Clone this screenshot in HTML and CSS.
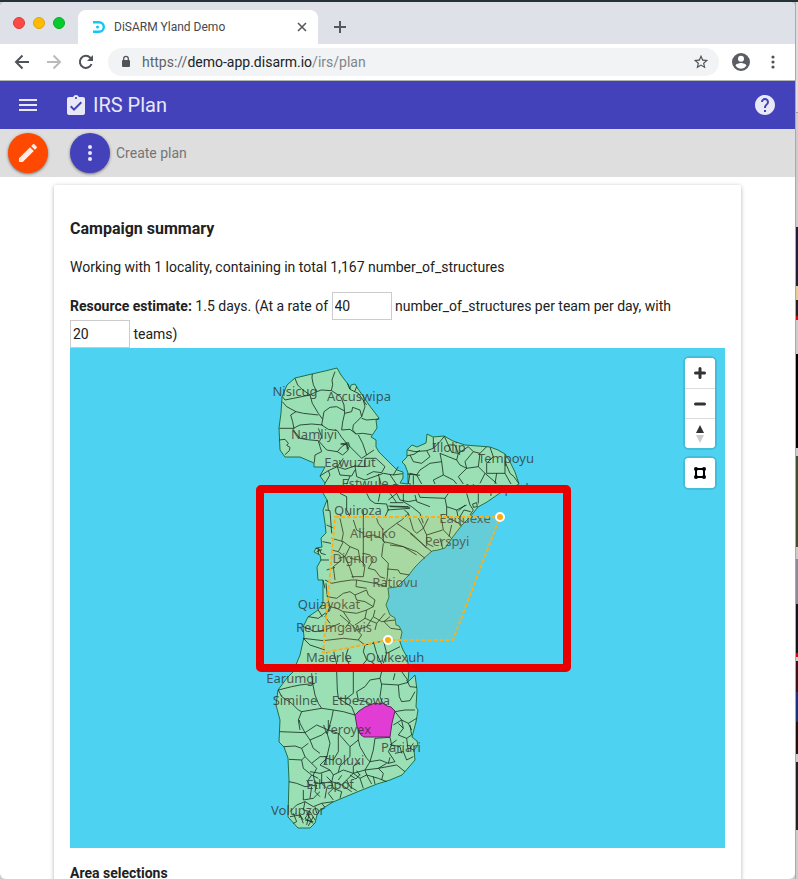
FILE: index.html
```html
<!DOCTYPE html>
<html lang="en">
<head>
<meta charset="utf-8">
<title>DiSARM Yland Demo</title>
<link rel="stylesheet" href="styles.css">
</head>
<body>
<div class="window">
  <header class="tabstrip">
    <div class="lights"><span class="light close"></span><span class="light minimise"></span><span class="light expand"></span></div>
    <div class="tab">
      <svg class="favicon" width="14" height="14" viewBox="0 0 14 14"><path d="M1 2.200h6a4.800 4.800 0 0 1 0 9.600H1" fill="none" stroke="#0fc8f5" stroke-width="2.400"/><circle cx="5.500" cy="7" r="1.500" fill="#0fc8f5"/></svg>
      <span class="tab-title">DiSARM Yland Demo</span>
      <button class="plain" aria-label="Close tab"><svg width="10" height="10" viewBox="0 0 10 10"><path d="M1 1l8 8M9 1l-8 8" stroke="#55595e" stroke-width="1.600"/></svg></button>
    </div>
    <button class="plain new-tab" aria-label="New tab"><svg width="12" height="12" viewBox="0 0 12 12"><path d="M6 0v12M0 6h12" stroke="#55595e" stroke-width="2"/></svg></button>
  </header>
  <nav class="toolbar">
    <button class="plain nav-button" aria-label="Back"><svg width="16" height="16" viewBox="0 0 16 16"><path d="M15 8H2M8.500 1.500L2 8l6.500 6.500" fill="none" stroke="#50545a" stroke-width="2"/></svg></button>
    <button class="plain nav-button" aria-label="Forward"><svg width="16" height="16" viewBox="0 0 16 16"><path d="M1 8h13M7.500 1.500L14 8l-6.500 6.500" fill="none" stroke="#b9bbbd" stroke-width="2"/></svg></button>
    <button class="plain nav-button" aria-label="Reload"><svg width="16" height="16" viewBox="0 0 16 16"><path d="M13.500 10A6 6 0 1 1 12.300 3.800L14 5.500" fill="none" stroke="#50545a" stroke-width="2"/><path d="M15 1v6H9z" fill="#50545a"/></svg></button>
    <div class="omnibox">
      <svg width="10" height="14" viewBox="0 0 10 14"><rect x="1" y="5" width="8" height="7" rx="1" fill="#50545a"/><path d="M2.700 5V3.600a2.300 2.300 0 0 1 4.600 0V5" fill="none" stroke="#50545a" stroke-width="1.300"/></svg>
      <span class="url">https://<b>demo-app.disarm.io</b><i>/irs/plan</i></span>
      <button class="plain" aria-label="Bookmark this page"><svg width="16" height="16" viewBox="1 1 22 22"><path fill="#50545a" d="M22 9.240l-7.190-.62L12 2 9.190 8.630 2 9.240l5.460 4.730L5.820 21 12 17.270 18.180 21l-1.630-7.030L22 9.240zM12 15.400l-3.760 2.270 1-4.280-3.320-2.880 4.380-.38L12 6.100l1.710 4.040 4.380.38-3.320 2.880 1 4.280L12 15.400z"/></svg></button>
    </div>
    <button class="plain profile" aria-label="Profile"><svg width="20" height="20" viewBox="2 2 20 20"><path fill="#5a5e64" d="M12 3a9 9 0 1 0 0 18 9 9 0 0 0 0-18zm0 2.800a3 3 0 1 1 0 6 3 3 0 0 1 0-6zm0 12.900a6.500 6.500 0 0 1-5.400-3c0-1.800 3.600-2.700 5.400-2.700s5.400.9 5.400 2.700a6.500 6.500 0 0 1-5.400 3z"/></svg></button>
    <button class="plain more" aria-label="Browser menu"><svg width="4" height="14" viewBox="0 0 4 14" fill="#50545a"><circle cx="2" cy="2" r="1.600"/><circle cx="2" cy="7" r="1.600"/><circle cx="2" cy="12" r="1.600"/></svg></button>
  </nav>

  <div class="appbar">
    <button class="plain" aria-label="Menu"><svg width="18" height="12" viewBox="0 0 18 12" fill="#e8e8f6"><path d="M0 0h18v2H0zM0 5h18v2H0zM0 10h18v2H0z"/></svg></button>
    <svg class="plan-icon" width="18" height="20" viewBox="3 1 18 20"><path fill="#e8e8f6" d="M19 3h-4.180C14.400 1.840 13.300 1 12 1s-2.400.84-2.820 2H5c-1.100 0-2 .9-2 2v14c0 1.100.9 2 2 2h14c1.100 0 2-.9 2-2V5c0-1.100-.9-2-2-2zm-7 0c.55 0 1 .45 1 1s-.45 1-1 1-1-.45-1-1 .45-1 1-1zm-2 14l-4-4 1.410-1.410L10 14.170l6.590-6.590L18 9l-8 8z"/></svg>
    <h1>IRS Plan</h1>
    <button class="plain help" aria-label="Help"><svg width="20" height="20" viewBox="2 2 20 20"><path fill="#e8e8f6" d="M12 2C6.480 2 2 6.480 2 12s4.480 10 10 10 10-4.480 10-10S17.520 2 12 2zm1 17h-2v-2h2v2zm2.070-7.750l-.9.920C13.450 12.900 13 13.500 13 15h-2v-.5c0-1.100.45-2.100 1.170-2.830l1.240-1.260c.37-.36.59-.86.59-1.410 0-1.100-.9-2-2-2s-2 .9-2 2H8c0-2.210 1.790-4 4-4s4 1.790 4 4c0 .88-.36 1.680-.93 2.250z"/></svg></button>
  </div>
  <div class="actions">
    <button class="fab edit" aria-label="Edit"><svg width="18" height="18" viewBox="3 3 18 18"><path fill="#ffece5" d="M3 17.250V21h3.750L17.810 9.940l-3.750-3.750L3 17.250zM20.710 7.040c.39-.39.39-1.020 0-1.410l-2.340-2.340c-.39-.39-1.020-.39-1.410 0l-1.830 1.830 3.750 3.750 1.830-1.830z"/></svg></button>
    <button class="fab options" aria-label="Options"><svg width="4" height="16" viewBox="0 0 4 16" fill="#e8e8f6"><circle cx="2" cy="2" r="2"/><circle cx="2" cy="8" r="2"/><circle cx="2" cy="14" r="2"/></svg></button>
    <span class="actions-label">Create plan</span>
  </div>

  <main class="content">
    <section class="card">
      <h2>Campaign summary</h2>
      <p>Working with 1 locality, containing in total 1,167 number_of_structures</p>
      <p class="estimate"><strong>Resource estimate:</strong> 1.5 days. (At a rate of <input type="text" value="40" aria-label="Structures per team per day"> number_of_structures per team per day, with <input type="text" value="20" aria-label="Number of teams"> teams)</p>
      <div class="map">
        <svg class="map-canvas" viewBox="70 348 655 500" preserveAspectRatio="xMidYMid slice">
          <path class="land" d="M337 368L341 375 344 379 348 384 350 389 351 385 355 384 358 389 363 396 369 405 379 418 376 420 377 428 373 434 371 437 376 440 376 447 379 452 386 459 392 465 397 470 403 472 403 478 400 483 408 484 408 473 405 465 402 462 407 457 407 450 412 445 417 447 426 443 427 434 433 437 444 436 453 441 465 445 490 447 498 450 505 454 509 460 515 472 519 484 510 489 500 493 487 502 478 507 470 517 462 525 452 538 445 548 438 550 432 551 422 560 415 567 408 576 397 587 388 588 389 597 386 605 388 610 390 615 395 618 396 625 399 626 402 632 400 642 403 650 407 657 409 670 408 682 412 678 415 675 417 690 416 707 418 710 416 722 412 737 417 741 418 745 414 750 415 760 409 767 402 775 390 780 377 784 357 792 333 802 320 810 317 815 315 823 310 828 298 828 288 817 289 780 288 758 284 747 279 742 280 720 276 705 278 690 287 678 293 672 300 655 304 637 303 627 308 617 318 610 323 603 323 580 318 580 317 567 321 560 320 555 314 552 316 548 322 547 321 538 326 533 325 523 323 510 327 500 323 493 325 483 320 476 325 467 314 467 314 463 300 457 285 457 280 450 279 428 281 413 282 397 287 385 295 378 312 374 325 371z"/>
          <g class="borders" transform="translate(250 350) scale(.3333)">
            <path d="M135 85l8 20 12 12 25 18 7 25 18 30 13 18M187 72l-1 12 4 20 10 21M200 125l14-5 30 2 4-18-2-14 9-25M180 135l20-10M245 122l27 18 10 25 2 25-6 26-3 24M218 208l4-23 18-13 20-2 22 12M97 140l8 10 25-5 50-10M97 155l13 15 28 15 22 5 45 5M138 185l-16 10 6 20 4 22M88 235h42l20-10 35-3 33 3M218 208l-3 17 20 13 27 4 13 20 15 18M128 237l22 28 22 4 33 3 5 18 5 15-20 10-2 23M88 270l17-2 10 12-5 6 10 6-2 10-13 12M205 235l10 25-7 15 22 25 32 5 13-15 15-10M275 240l25-2 18 14 20-2 27 4M284 190l21-5 3-13 22 8 5 20-25 25-2 15 10 12M335 205l15 5 38-3M335 200l10-30-5-20M292 100l8 18 25 12 25 35M320 110l-6 15M325 255l13 25 12 35 22-15M290 280l5 20-17 15-16-10M272 282l18 2 2 14 6-8-2-12zM290 280l20 20 25 25 15-10M210 378l25-16 27-12 23 8 30-10 30 2V325M262 350l8 25 35 3 10-18M280 325l-18 25M315 348l5 32 25 10 55-20 30 5 28-4M350 375l20-10 25 3 10-18-27-25h-33M225 400l15-25-5-13M430 375l15-25M300 378l-10 25M385 372l8 32M420 374l20 30M472 317l20-4 18-12M472 372l38 4M490 376v28"/>
          </g>
          <g class="borders" transform="translate(390 410) scale(.3333)">
            <path d="M53 120l22 5 35-3 10 18-25 20-25-5-10-20M130 82v33l-20 7M130 115l20-20 13-16M60 190l20 5 10-15 30-20 35-5 5 40M155 155l-5-25 25 10 25 10 5-20-10-25M205 130l30-20 15 15-25 30 5 20M200 150l10 15 20 10 35-5 20 20-15 30M230 175l-25 25 15 22M250 125l20 5 20-20M270 130l-5 40M300 112l10 28-20 20v30h55M345 133v57l18 32M345 155l15 35 12 10 14 20M320 190l-5 32M160 195l30 15 10 12M60 190l-5 32M80 195l15 27M160 195l-30 15 5 12M163 79l12 26 10 22 20 3M175 105l20 0M285 190l35 30M40 250v25l25 15M85 250l5 12 75 3 5 25 30 10 30-15M165 265l10-15M230 250l10 35 10 15M265 250v30M65 290l25 20 10 30M170 290v30l45 25M85 325l12 22 13 28v25l20 10M0 405l40 5 40 25M60 370l65 55M155 330l5 30 25 25M110 375l48-15M200 300l5 25 15 12M225 285l-20 18M248 282l12-4 2 12-12 2zM250 300l-10 15M0 290l60 2M0 278h40M0 250l20 28M185 345l-8 35M150 385l8 30M210 320l12-20 20 5"/>
          </g>
          <g class="borders" transform="translate(250 480) scale(.3333)">
            <path d="M235 90l-3-30M270 40l20 10v40l10 20M225 90l15 2 5 68M350 40l10 20 15 10 35 2 5 18-10 20M390 40l-5 25M415 60l25-20 10 20 25 5 25-5M415 78l60 2M412 90l68-5M495 45l5 20 40 15M340 90v170M270 115l10 45-5 25M310 120l10 30 20 10M340 170l30-5 25 10 10 15M440 130l-40 30v25l25 5 35 10 40 15 25 20M440 130l30 20 20 15 40 40M475 100l15 50 10 10 20-15 15-30M440 130l15-10 20-20-12-10M380 115l5 15 15 20M400 190l-5 40 20 20-3 40-4 30M412 267l33 3 5 10 28 5M245 175l35 10 20 15 25 10 5 30 15 15M280 185l-15 30M300 200l-15 30-20 5M245 210l20 5 20 15 15 35 10 30M355 265l15-25-10-15-20-5M355 265l20 5 15 20 15 5M345 255l-5 35h-35M225 300l20 10 25-5 35-5h15l-2 20 32 5M250 260l5 40M250 260l25-20M228 310l4 40 28 5 20-15 20-5 15 10 35-15M320 300l55 10 35 10M315 345l5 15 25 5 25 15 5-20-20-15-5-15M232 350l8 30 20 5 20 10 40 5 30-10 20-10M240 380l-15 30 15 20M280 395l20 30-15 20M350 390l-5 25 35 15 25-30M197 205l12 3 4 12 14 4M200 215l16-6M205 205v18M212 240h25M230 270l25-8M300 235l28 5M205 390l12 20M380 430l-5 20M345 415l-30 20M230 135l18 8M218 185l25 5M225 325l-6-25"/>
          </g>
          <g class="borders" transform="translate(250 610) scale(.3333)">
            <path d="M175 20l30 5 20-15 15-10M160 85l60 7 60-7 45 5 10-15-15-15-20-20-30-25M320 60l30-10 20-30 5-20M325 90l20 15 45-10M160 85l20 20 45 15M345 105l-5 20 10 25-10 12M370 95l10 35 15 32M400 90l10 40 40-20M85 240l40-10 25-5 45-5M185 190l3 30 7 35 10 25 10 15M260 185l2 55 3 25 40 25 10 25M265 265h25l20-15v-65M320 245l5 25 25 5 20 15M320 245l25-15 15-20 30-5 5-20M390 205l5 20-5 35 10 25M395 222l50 3 3 35 7 15 25-3 15-27M435 190l-5 20M470 210l10 20 20 2M85 240l10 20 30 20 20 20 10 5-10 25 5 30M155 305l60-10 35 5 30 5 35 10M250 300l-5 25-10 35M435 305l30-5h30M435 305l20 25 20 10 25-15M160 50l35 15 30-5M225 60l45-20M250 120l10 42M295 115l-8 25 10 22M410 130l-10 30M370 20l25 15 40-5M420 20l-18 15 20 20 30 4M455 185l18 25M445 225l30-8M455 330l-25 15M475 340l10 20"/>
          </g>
          <g class="borders" transform="translate(250 720) scale(.3333)">
            <path d="M90 35l75 3 15 22 10 25 20 15M165 38l-15-28-2-10M165 38l35-23 35 15V0M180 60l35-15 20-15M230 35l10 35-8 35M235 30l30 10 35 40 25-20M265 40v55l-15 25M300 80v30l-30 28M325 0v60l5 20 20 35 10 10M375 55l-5 35-10 35M375 55l45-3 5 23-10 20 20 30M102 80l33-2 20 7 10 25-10 10-38-2M155 85l20-15M165 110l20 20 15 15M185 130l25-20 22 0M155 120l5 25 25 20-10 15M117 185l23 5 25 10 35-5M160 210v30M250 120l-20-5-20 20 30 15 10 15 30-15 30 10 35-10 40-5 55-10M250 165l-5 20 30 10 15-15 20-20M310 160l20 15 20-10 35 10 25 10M345 150l5 15M385 145l15 15-5 20M290 180l10 20 20 12M200 145l-10 20 5 25h20l15 15-5 30M215 190l30-5 5 20 25 10-5 20M250 205l-15 15 15 20M160 240l30-5 20-20M140 255l25-10 25 15 25-10 35-5M140 255l-20 20M165 245l-5 25 20 5 15 25M150 285l10 25M180 275l-15 20 25 15M120 290l30-5 10 15M440 60l-20 15M445 10l15 15-15 20 25 10 15-10M435 100l25-5 10 25 20-10M270 138l-5 18M232 105l-10 30M330 128l-20 10 0 22M360 125l-15 25M360 125l30-5 25 10 20-5M410 130l-25 15M330 175l10 30M350 165l15 27M370 170l5 22M185 165l20 10M170 180l10 18M185 200l-5 35M200 195l-5 20 15 15M275 195l30 20M265 180l10-14M300 165l18 12 12-14M320 152l10 14M180 155l30 5 30-10M215 160v30M230 170l15 15M195 260l5 20M215 250l10 12M170 275l15 30M178 280l-8 35M165 300l25 5M190 290l-15 28M130 280l10 25-10 5M455 0l5 25M470 55l5 40M485 45l-5-30M425 75l25 5 5 20M490 70l-10 15 12 5M415 130l5-18M440 135l25 20"/>
          </g>
          <path class="picked" d="M355 715l4-4 6-4 10-4 4 1 4-1 4 3 4 1 4 4-3 12-2 14h-26l-3-2-4-8z"/>
          <g class="labels">
            <text x="295" y="396">Nisicug</text><text x="359" y="401">Accuswipa</text><text x="314" y="439">Namliyi</text><text x="350" y="467">Eawuzut</text><text x="365" y="488">Estwule</text>
            <text x="449" y="452">Illolip</text><text x="506" y="463">Tempoyu</text><text x="418" y="493">Bubuses</text><text x="501" y="493">Nospepudu</text>
            <text x="358" y="515">Quiroza</text><text x="373" y="538">Aliquko</text><text x="465" y="523">Eaquexe</text><text x="447" y="546">Perspyi</text><text x="355" y="563">Digniro</text><text x="395" y="587">Ratiovu</text>
            <text x="329" y="609">Quiayokat</text><text x="334" y="632">Rerumgawis</text><text x="329" y="662">Maierle</text><text x="395" y="662">Quikexuh</text><text x="292" y="683">Earumgi</text>
            <text x="295" y="705">Similne</text><text x="361" y="705">Etbezowa</text><text x="347" y="734">Veroyex</text><text x="401" y="752">Pariari</text><text x="344" y="765">Illoluxi</text><text x="330" y="789">Ethapof</text><text x="298" y="815">Volupzor</text>
          </g>
          <path class="selection" d="M335 517H500L453 640H388L323 653z"/>
          <circle class="vertex" cx="500" cy="517" r="4"/><circle class="vertex" cx="388" cy="640" r="4"/>
          <rect class="highlight" x="260" y="489" width="307" height="179" rx="1"/>
        </svg>
        <div class="map-controls">
          <div class="control-group">
            <button aria-label="Zoom in"><svg width="12" height="12" viewBox="0 0 12 12"><path d="M6 1.500v9M1.500 6h9" stroke="#333" stroke-width="3" stroke-linecap="round"/></svg></button>
            <button aria-label="Zoom out"><svg width="12" height="12" viewBox="0 0 12 12"><path d="M1.500 6h9" stroke="#333" stroke-width="3" stroke-linecap="round"/></svg></button>
            <button aria-label="Reset north"><svg width="8" height="18" viewBox="0 0 8 18"><path d="M4 0l4 8H0z" fill="#333"/><path d="M4 18l4-8H0z" fill="#ccc"/></svg></button>
          </div>
          <div class="control-group">
            <button aria-label="Draw polygon"><svg width="14" height="14" viewBox="0 0 14 14"><path d="M3 3h8v8H3z" fill="none" stroke="#000" stroke-width="2"/><g><circle cx="3" cy="3" r="2"/><circle cx="11" cy="3" r="2"/><circle cx="3" cy="11" r="2"/><circle cx="11" cy="11" r="2"/></g></svg></button>
          </div>
        </div>
      </div>
      <h3>Area selections</h3>
    </section>
  </main>
</div>
<div class="backdrop"></div>
</body>
</html>
```
FILE: styles.css
```css
* { box-sizing: border-box; }
body {
  margin: 0;
  height: 100vh;
  display: flex;
  overflow: hidden;
  border-top: 2px solid #26323a;
  background: #ccc;
  color: #212121;
  font: 14px/20px Roboto, sans-serif;
}
h1, h2, h3, p { margin: 0; }
svg { display: block; flex: none; }
.window {
  flex: 1;
  min-width: 0;
  display: flex;
  flex-direction: column;
  background: #fff;
  border-radius: 6px;
  overflow: hidden;
}
.backdrop {
  width: 3px;
  border-left: 1px solid #aaa;
  background: linear-gradient(#ddd 0 110px, #999 110px 111px, #ccc 111px 225px, #20203a 225px 284px, #ddd293 284px 298px, #222 298px 314px, #e00000 314px 318px, #ccc 318px 352px, #000 352px 446px, #ccc 446px 454px, #3b5130 454px 545px, #ccc 545px 557px, #888a98 557px 602px, #101420 602px 651px, #e00000 651px 655px, #ccc 655px 659px, #401018 659px 690px, #173080 690px 720px, #201010 720px 752px, #ccc 752px 760px, #222 760px 828px, #ccc 828px);
}
.plain {
  padding: 0;
  border: 0;
  background: none;
  display: flex;
  align-items: center;
  justify-content: center;
}

/* Browser frame */
.tabstrip {
  display: flex;
  align-items: flex-end;
  flex: none;
  height: 42px;
  padding-left: 13px;
  background: #dee1e8;
}
.lights { display: flex; gap: 8px; width: 65px; padding-bottom: 15px; }
.light { width: 12px; height: 12px; border-radius: 50%; }
.close { background: #fc4a44; border: 1px solid #e03a35; }
.minimise { background: #fdbc02; border: 1px solid #e0a310; }
.expand { background: #05cc2c; border: 1px solid #0cab29; }
.tab {
  display: flex;
  align-items: center;
  width: 240px;
  height: 34px;
  padding: 0 11px 0 14px;
  border-radius: 8px 8px 0 0;
  background: #fff;
}
.tab-title { flex: 1; padding-left: 8px; font-size: 12px; color: #45494d; }
.new-tab { width: 44px; height: 34px; }
.toolbar {
  display: flex;
  align-items: center;
  flex: none;
  height: 37px;
  padding: 0 12px 0 6px;
  border-bottom: 1px solid #b4b4b4;
  background: #fff;
}
.nav-button { width: 32px; height: 28px; }
.omnibox {
  display: flex;
  align-items: center;
  flex: 1;
  height: 28px;
  margin-left: 6px;
  padding: 0 10px 0 13px;
  border-radius: 14px;
  background: #f1f3f4;
}
.url { flex: 1; padding-left: 11px; color: #5f6368; }
.url b { color: #202124; font-weight: 400; }
.url i { color: #80868b; font-style: normal; }
.profile { width: 44px; }
.more { width: 20px; }

/* Application */
.appbar {
  display: flex;
  align-items: center;
  flex: none;
  height: 48px;
  padding: 0 20px 0 19px;
  background: #4442bb;
}
.plan-icon { margin-left: 30px; }
h1 { padding-left: 8px; font-size: 20px; line-height: 28px; font-weight: 400; color: #e8e8f6; }
.help { margin-left: auto; }
.actions {
  display: flex;
  align-items: center;
  flex: none;
  height: 48px;
  padding: 0 8px;
  background: #dedede;
}
.fab {
  display: flex;
  align-items: center;
  justify-content: center;
  width: 40px;
  height: 40px;
  padding: 0;
  border: 0;
  border-radius: 50%;
  box-shadow: 0 1px 3px rgba(0, 0, 0, .5);
}
.edit { background: #ff4800; }
.options { margin-left: 22px; background: #4442bb; }
.actions-label { padding-left: 6px; color: #757575; }
.content { flex: 1; min-height: 0; padding: 8px 54px 0; }
.card {
  padding: 0 16px 16px;
  border-radius: 2px;
  background: #fff;
  box-shadow: 0 1px 4px rgba(0, 0, 0, .3);
}
h2 { padding: 32px 0 16px; font-size: 16px; line-height: 24px; }
.card p { margin-bottom: 15px; }
.card .estimate { margin: 0; line-height: 28px; }
.estimate input {
  width: 60px;
  height: 28px;
  padding: 0 2px;
  border: 1px solid #ccc;
  color: #212121;
  font: 14px Roboto, sans-serif;
  vertical-align: top;
}
h3 { padding-top: 15px; font-size: 14px; line-height: 20px; }

/* Map */
.map { position: relative; height: 500px; background: #4dd2f1; }
.map-canvas { width: 100%; height: 100%; }
.land { fill: #9be0b4; stroke: #1f7048; stroke-width: 1; }
.borders path { fill: none; stroke: #10281c; stroke-width: 2.4; stroke-linejoin: round; }
.picked { fill: #e13dd5; stroke: #5a2858; stroke-width: 1; }
.labels text { font: 13px "Noto Sans", "Open Sans", sans-serif; text-anchor: middle; fill: #333; fill-opacity: .8; }
.selection { fill: #fbb03b; fill-opacity: .14; stroke: #fbb01b; stroke-width: 2; stroke-dasharray: 4 2; }
.vertex { fill: #fbab10; stroke: #fff; stroke-width: 2; }
.highlight { fill: none; stroke: #e60000; stroke-width: 8; stroke-linejoin: round; }
.map-controls { position: absolute; top: 10px; right: 10px; display: grid; gap: 10px; }
.control-group {
  display: grid;
  overflow: hidden;
  border-radius: 4px;
  background: #fff;
  box-shadow: 0 0 0 2px rgba(0, 0, 0, .1);
}
.control-group button {
  display: flex;
  align-items: center;
  justify-content: center;
  width: 30px;
  height: 30px;
  padding: 0;
  border: 0;
  background: #fff;
}
.control-group button + button { border-top: 1px solid #ddd; }
```
